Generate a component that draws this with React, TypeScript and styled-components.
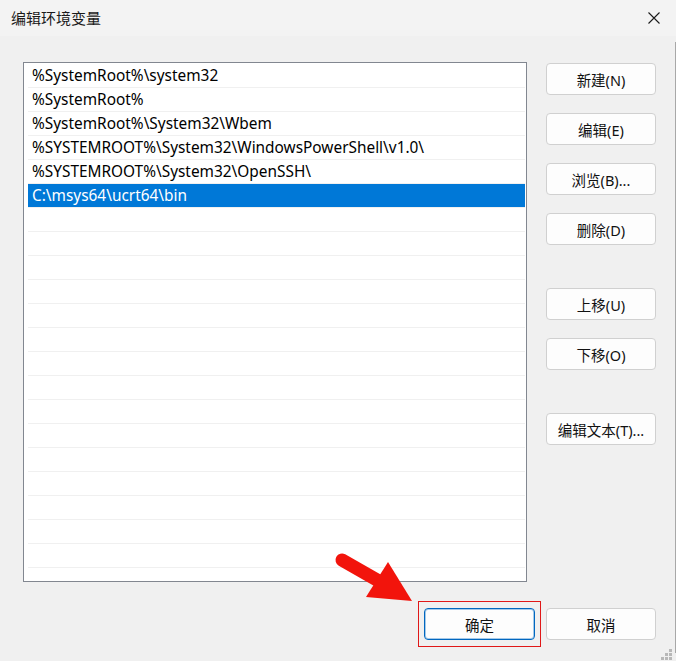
import React from "react";
import styled, { createGlobalStyle } from "styled-components";

const Global = createGlobalStyle`
  html, body { margin: 0; padding: 0; background: #f0f0f0; }
  body { font-family: "Noto Sans", "Noto Sans CJK SC", sans-serif; }
  #root { width: 676px; height: 661px; }
`;

const Window = styled.div`
  position: relative;
  width: 676px;
  height: 661px;
  background: #f0f0f0;
  display: flex;
  flex-direction: column;
  overflow: hidden;
`;

const TitleBar = styled.div`
  height: 36px;
  flex: none;
  background: #f3f3f3;
  display: flex;
  align-items: center;
  justify-content: space-between;
  padding: 0 16px 0 11px;
`;

const Title = styled.div`
  font-family: "Noto Sans CJK SC", sans-serif;
  font-size: 15px;
  color: #1a1a1a;
  line-height: 20px;
  margin-top: -1px;
`;

const CloseButton = styled.div`
  width: 12px;
  height: 12px;
  display: flex;
`;

const Body = styled.div`
  position: relative;
  flex: 1;
  display: flex;
  flex-direction: column;
  padding: 26px 20px 0 23px;
  &::after {
    content: "";
    position: absolute;
    right: 0;
    top: 6px;
    bottom: 8px;
    width: 1px;
    background: #a8a8a8;
  }
`;

const Main = styled.div`
  display: flex;
  gap: 19px;
`;

const List = styled.div`
  width: 504px;
  height: 520px;
  box-sizing: border-box;
  border: 1px solid #828790;
  background: #ffffff;
  padding: 1px 1px 0 4px;
  overflow: hidden;
`;

const Row = styled.div<{ $selected?: boolean }>`
  height: 23px;
  border-bottom: 1px solid #f0f0f0;
  padding-left: 4px;
  display: flex;
  align-items: center;
  font-family: "Noto Sans", sans-serif;
  font-size: 15.4px;
  white-space: nowrap;
  color: ${(p) => (p.$selected ? "#ffffff" : "#000000")};
  background: ${(p) => (p.$selected ? "#0078d7" : "transparent")};
`;

const ButtonColumn = styled.div`
  width: 110px;
  display: flex;
  flex-direction: column;
  padding-top: 1px;
`;

const Button = styled.div<{ $gap?: number; $primary?: boolean }>`
  width: ${(p) => (p.$primary ? 111 : 110)}px;
  height: 32px;
  box-sizing: border-box;
  margin-top: ${(p) => p.$gap ?? 0}px;
  border: 1px solid ${(p) => (p.$primary ? "#0067c0" : "#d0d0d0")};
  box-shadow: ${(p) => (p.$primary ? "inset 0 0 0 1px rgba(0,103,192,0.35)" : "none")};
  border-radius: 4px;
  background: #fdfdfd;
  display: flex;
  align-items: center;
  justify-content: center;
  font-family: "Noto Sans", "Noto Sans CJK SC", sans-serif;
  font-size: 14.5px;
  color: #111111;
  white-space: nowrap;
`;

const Footer = styled.div`
  display: flex;
  justify-content: flex-end;
  align-items: center;
  gap: 5px;
  padding-top: 19px;
`;

const Highlight = styled.div`
  border: 1px solid #e01818;
  padding: 6px 5px;
  display: flex;
`;

const Arrow = styled.svg`
  position: absolute;
  left: 330px;
  top: 545px;
  width: 90px;
  height: 65px;
  overflow: visible;
`;

const Grip = styled.svg`
  position: absolute;
  right: 3px;
  bottom: 0px;
  width: 12px;
  height: 12px;
`;

const entries = [
  "%SystemRoot%\\system32",
  "%SystemRoot%",
  "%SystemRoot%\\System32\\Wbem",
  "%SYSTEMROOT%\\System32\\WindowsPowerShell\\v1.0\\",
  "%SYSTEMROOT%\\System32\\OpenSSH\\",
  "C:\\msys64\\ucrt64\\bin",
];

const rows = Array.from({ length: 22 }, (_, i) => entries[i] ?? "");

const sideButtons: { label: string; gap: number }[] = [
  { label: "新建(N)", gap: 0 },
  { label: "编辑(E)", gap: 18 },
  { label: "浏览(B)...", gap: 18 },
  { label: "删除(D)", gap: 18 },
  { label: "上移(U)", gap: 43 },
  { label: "下移(O)", gap: 18 },
  { label: "编辑文本(T)...", gap: 43 },
];

export default function App() {
  return (
    <>
      <Global />
      <Window>
        <TitleBar>
          <Title>编辑环境变量</Title>
          <CloseButton>
            <svg width="12" height="12" viewBox="0 0 12 12">
              <path d="M0.5 0.5 L11.5 11.5 M11.5 0.5 L0.5 11.5" stroke="#1a1a1a" strokeWidth="1.1" />
            </svg>
          </CloseButton>
        </TitleBar>
        <Body>
          <Main>
            <List>
              {rows.map((r, i) => (
                <Row key={i} $selected={i === 5}>
                  {r}
                </Row>
              ))}
            </List>
            <ButtonColumn>
              {sideButtons.map((b) => (
                <Button key={b.label} $gap={b.gap}>
                  {b.label}
                </Button>
              ))}
            </ButtonColumn>
          </Main>
          <Footer>
            <Highlight>
              <Button $primary>确定</Button>
            </Highlight>
            <Button>取消</Button>
          </Footer>
        </Body>
        <Arrow viewBox="330 545 90 65">
          <line x1="342" y1="560" x2="384" y2="584" stroke="#f2140c" strokeWidth="13" strokeLinecap="round" />
          <polygon points="388,562 412,601 366,597" fill="#f2140c" />
        </Arrow>
        <Grip viewBox="0 0 12 12">
          {[
            [8, 0],
            [4, 4],
            [8, 4],
            [0, 8],
            [4, 8],
            [8, 8],
          ].map(([x, y], i) => (
            <rect key={i} x={x} y={y} width="3" height="3" fill="#b8b8b8" />
          ))}
        </Grip>
      </Window>
    </>
  );
}
